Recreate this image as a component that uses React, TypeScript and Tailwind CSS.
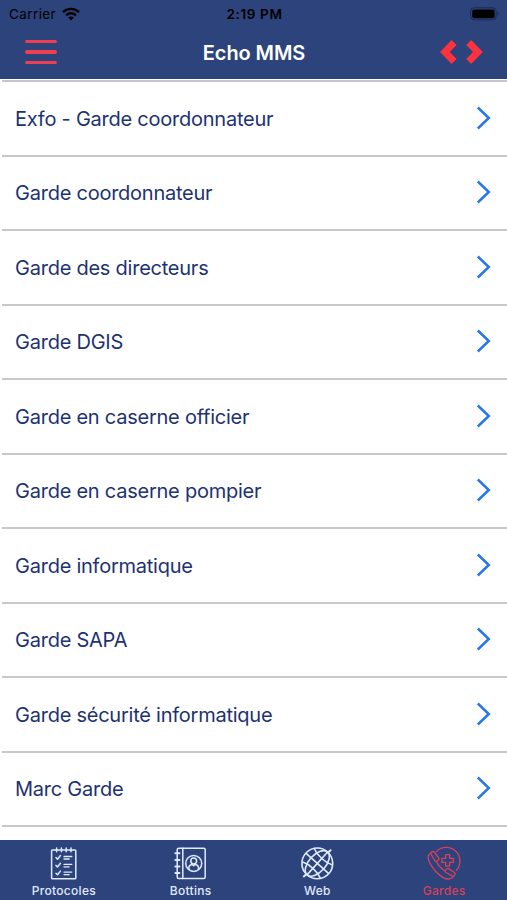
import { useState } from 'react';
import type { ReactNode } from 'react';

const gardes = [
  'Exfo - Garde coordonnateur',
  'Garde coordonnateur',
  'Garde des directeurs',
  'Garde DGIS',
  'Garde en caserne officier',
  'Garde en caserne pompier',
  'Garde informatique',
  'Garde SAPA',
  'Garde sécurité informatique',
  'Marc Garde',
];

function WifiIcon() {
  return (
    <svg className="h-[14px] w-[18px]" viewBox="0 0 18 14" fill="none" stroke="currentColor" strokeWidth="2.4">
      <path d="M1 5.2C5.5 .7 12.5 .7 17 5.2" />
      <path d="M4.1 8.4C6.9 5.6 11.1 5.6 13.9 8.4" />
      <path d="M9 13.4 6.2 10.5C7.8 9 10.2 9 11.8 10.5Z" fill="currentColor" stroke="none" />
    </svg>
  );
}

function BatteryIcon() {
  return (
    <svg className="h-[14px] w-[30px]" viewBox="0 0 30 14">
      <rect x=".6" y=".8" width="25.6" height="12" rx="3.4" fill="none" stroke="#1b2a50" strokeWidth="1" />
      <rect x="2.2" y="2.4" width="22.4" height="8.9" rx="2" fill="#000" />
      <path d="M27.6 4.8v4c1.6-.6 1.6-3.4 0-4Z" fill="#1b2a50" />
    </svg>
  );
}

function ChecklistIcon() {
  return (
    <svg className="h-9 w-9" viewBox="0 0 36 36" fill="none" stroke="currentColor" strokeWidth="1.5" strokeLinecap="round" strokeLinejoin="round">
      <rect x="6.6" y="5" width="24.2" height="28.8" rx=".8" />
      <path d="M11.6 3v3.8M16.4 3v3.8M21.2 3v3.8M26 3v3.8" />
      <path d="m11 12.6 1.5 1.6 2.9-3.7M11 20.4l1.5 1.6 2.9-3.7M11 28.2l1.5 1.6 2.9-3.7" />
      <path d="M19 11.5h7.8M19 14h5.2M19 19.3h7.8M19 21.8h5.2M19 27.1h7.8M19 29.6h5.2" strokeWidth="1.3" />
    </svg>
  );
}

function ContactsIcon() {
  return (
    <svg className="h-9 w-9" viewBox="0 0 36 36" fill="none" stroke="currentColor" strokeWidth="1.5" strokeLinecap="round" strokeLinejoin="round">
      <rect x="5.2" y="3.2" width="28" height="30.4" rx="1.5" />
      <path d="M10.8 3.2v30.4" />
      <path d="M3.4 8.2h4M3.4 14.9h4M3.4 21.5h4M3.4 28.1h4" strokeWidth="2" />
      <circle cx="21.7" cy="18.4" r="8" />
      <circle cx="21.7" cy="16" r="2.9" />
      <path d="M16.9 24.2v-1.6c0-1.9 1.6-3 3.3-3.2l1.5 1.4 1.5-1.4c1.7.2 3.3 1.3 3.3 3.2v1.6" />
    </svg>
  );
}

function GlobeIcon() {
  return (
    <svg className="h-9 w-9" viewBox="0 0 36 36" fill="none" stroke="currentColor" strokeWidth="1.6">
      <circle cx="18.3" cy="18.4" r="15.4" />
      <g transform="rotate(42 18.3 18.4)">
        <path d="M18.3 3v30.8M2.9 18.4h30.8" />
        <ellipse cx="18.3" cy="18.4" rx="8.4" ry="15.4" />
        <path d="M6 9.4c7.2 3.2 17.4 3.2 24.6 0M6 27.4c7.2-3.2 17.4-3.2 24.6 0" />
      </g>
      <path d="m28.6 7.8 3-2.6M4.8 31.4l3-2.6" strokeWidth="2" strokeLinecap="round" />
    </svg>
  );
}

function EmergencyCallIcon() {
  return (
    <svg className="h-9 w-9" viewBox="0 0 36 36" fill="none" stroke="currentColor" strokeWidth="1.3" strokeLinejoin="round" strokeLinecap="round">
      <path d="M10.4 6.6A13.2 13.2 0 1 1 30.2 25.4" />
      <path d="M19.6 9.6h4v3.8h3.8v4h-3.8v3.8h-4v-3.8h-3.8v-4h3.8Z" />
      {/* combiné */}
      <path d="M4.4 8.2C1.8 10 1.4 13.6 4 18.4c3.6 6.6 8 11.2 13.4 14.2 4.2 2.3 7.4 1.8 10-1" />
      <path d="m4.4 8.2 2-1.6q1-.6 1.8.4l4.6 6q.6 1-.2 1.8l-1.8 1.4q-1 .6-1.6-.2Z" />
      <path d="m27.4 31.6 1.6-2q.6-1-.4-1.8l-6-4.2q-1-.6-1.8.2l-1.6 1.9q-.6.9.4 1.5Z" />
      <path d="M10.6 16.4c1.4 3.6 4.6 7.2 8.8 9.6" />
    </svg>
  );
}

interface Tab {
  label: string;
  icon: ReactNode;
}

const tabs: Tab[] = [
  { label: 'Protocoles', icon: <ChecklistIcon /> },
  { label: 'Bottins', icon: <ContactsIcon /> },
  { label: 'Web', icon: <GlobeIcon /> },
  { label: 'Gardes', icon: <EmergencyCallIcon /> },
];

export default function App() {
  const [activeTab, setActiveTab] = useState('Gardes');

  return (
    <div className="flex h-[900px] w-full flex-col overflow-hidden bg-white font-['Inter',sans-serif]">
      {/* Header */}
      <header className="h-[79px] shrink-0 bg-[#2c437b]">
        <div className="grid h-[27px] grid-cols-3 items-center pr-[7px] pl-[9px] text-[13.5px] text-black">
          <div className="flex items-center gap-1.5">
            <span className="pt-px tracking-[0.4px]">Carrier</span>
            <WifiIcon />
          </div>
          <span className="pt-px text-center font-semibold tracking-[0.65px]">2:19 PM</span>
          <div className="flex justify-end">
            <BatteryIcon />
          </div>
        </div>
        <div className="grid h-[50px] grid-cols-3 items-center pr-[24px] pl-[25px]">
          <button type="button" aria-label="Menu" className="flex w-8 flex-col gap-[7px] text-[#ed3f50]">
            <span className="h-[3.5px] rounded-full bg-current" />
            <span className="h-[3.5px] rounded-full bg-current" />
            <span className="h-[3.5px] rounded-full bg-current" />
          </button>
          <h1 className="pt-px text-center text-[20px] font-semibold tracking-[-0.1px] whitespace-nowrap text-white">Echo MMS</h1>
          <div className="flex justify-end gap-[9px] text-[#fb333f]">
            <button type="button" aria-label="Précédent">
              <svg className="h-6 w-[17px]" viewBox="0 0 17 24" fill="currentColor">
                <path d="M11.6 0 0 12l11.6 12 5-4.9L9.8 12l6.8-7.1Z" />
              </svg>
            </button>
            <button type="button" aria-label="Suivant">
              <svg className="h-6 w-[17px]" viewBox="0 0 17 24" fill="currentColor">
                <path d="M5.2 0l11.6 12L5.2 24l-5-4.9L7 12 .2 4.9Z" />
              </svg>
            </button>
          </div>
        </div>
      </header>

      {/* Liste des gardes */}
      <main className="flex-1 overflow-hidden pt-px pl-0.5">
        <ul className="border-t-2 border-[#c4c7cd]">
          {gardes.map((garde) => (
            <li key={garde} className="flex h-[74.5px] items-center justify-between border-b-2 border-[#c8c8c8] pr-4 pl-[13px]">
              <span className="pt-px text-[20px] tracking-[-0.24px] text-[#1d3272]">{garde}</span>
              <svg className="mb-px h-6 w-[15px]" viewBox="0 0 15 24" fill="none" stroke="#2776ec" strokeWidth="2.5">
                <path d="M1.8 1.5 12.8 12 1.8 22.5" />
              </svg>
            </li>
          ))}
        </ul>
      </main>

      {/* Onglets */}
      <nav className="grid h-[60px] shrink-0 grid-cols-4 bg-[#2c437b]">
        {tabs.map((tab) => (
          <button
            key={tab.label}
            type="button"
            onClick={() => setActiveTab(tab.label)}
            className={`flex flex-col items-center pt-[5px] ${activeTab === tab.label ? 'text-[#d8405c]' : 'text-[#e1eaff]'}`}
          >
            {tab.icon}
            <span className="mt-[2px] pl-px text-[12px] leading-4 font-medium tracking-[0.3px]">{tab.label}</span>
          </button>
        ))}
      </nav>
    </div>
  );
}
